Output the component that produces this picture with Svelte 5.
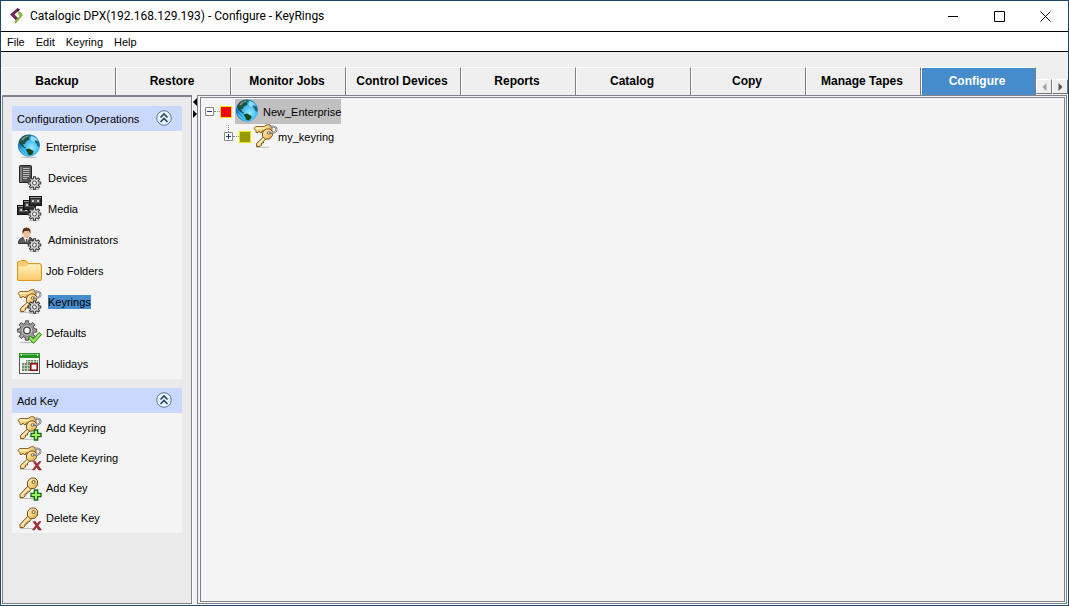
<script>
  const menus = ['File', 'Edit', 'Keyring', 'Help'];
  const tabs = ['Backup', 'Restore', 'Monitor Jobs', 'Control Devices', 'Reports', 'Catalog', 'Copy', 'Manage Tapes', 'Configure'];
  const groups = [
    {
      title: 'Configuration Operations',
      rows: [
        { icon: 'globe', label: 'Enterprise' },
        { icon: 'server', label: 'Devices', wide: true },
        { icon: 'media', label: 'Media', wide: true },
        { icon: 'admin', label: 'Administrators', wide: true },
        { icon: 'folder', label: 'Job Folders' },
        { icon: 'keysGear', label: 'Keyrings', wide: true },
        { icon: 'defaults', label: 'Defaults' },
        { icon: 'calendar', label: 'Holidays' }
      ]
    },
    {
      title: 'Add Key',
      compact: true,
      rows: [
        { icon: 'keysAdd', label: 'Add Keyring' },
        { icon: 'keysDelete', label: 'Delete Keyring' },
        { icon: 'keyAdd', label: 'Add Key' },
        { icon: 'keyDelete', label: 'Delete Key' }
      ]
    }
  ];

  let activeTab = $state('Configure');
  let selected = $state('Keyrings');
  let closed = $state({});

  function gearPath(cx, cy, outer, inner, teeth = 8) {
    const step = (Math.PI * 2) / teeth;
    const at = (r, a) => `${(cx + r * Math.cos(a)).toFixed(2)} ${(cy + r * Math.sin(a)).toFixed(2)}`;
    let d = '';
    for (let i = 0; i < teeth; i++) {
      const a = i * step;
      d += `${i ? 'L' : 'M'}${at(inner, a - step * 0.3)}L${at(outer, a - step * 0.2)}L${at(outer, a + step * 0.2)}L${at(inner, a + step * 0.3)}`;
    }
    return d + 'Z';
  }
  const smallGear = gearPath(17.5, 18, 6.3, 4.5);
  const bigGear = gearPath(10, 10.5, 9.8, 7.4);
</script>

{#snippet globe()}
  <ellipse cx="12" cy="23.3" rx="8" ry="0.8" fill="#bbb" />
  <circle cx="12" cy="11.500" r="11" fill="url(#sea)" />
  <path d="M2.500 6C4.500 2.500 8 .8 12 .7L13 2 11.500 3.500 12.500 5.500 10 7 8.500 8 8 10 6 10 7 12.500 9.500 14 8 14.500 5 12.500 2.500 9.500Z" fill="#1d4f42" />
  <path d="M8.500 15.500 12 14.500 16.500 17 16 19.500 13.500 21.500 11 20.500 10.500 18.500Z" fill="#124a1c" />
  <path d="M19 5 21 6.500 22.500 10 22.500 13 20.500 12 19.500 9.500 18 8Z" fill="#1e6272" />
  <path d="M4.500 5.500C6.500 2.500 9 1.500 12 1.500L11 3 8.500 3.500 7 5.500 4.500 7Z" fill="#9aa79a" opacity=".8" />
  <path d="M14 2C18 2.500 20.500 5 21 7.500L18 6 16 8 13.500 5.500Z" fill="#b4edff" opacity=".75" />
  <path d="M2 14C4 19 8 21.500 11 21.800 6 18.500 5 16 2 14Z" fill="#7fe0ff" opacity=".6" />
{/snippet}

{#snippet gear()}
  <ellipse cx="17" cy="24.300" rx="6" ry=".6" fill="#bbb" />
  <path d={smallGear} fill="#dadada" stroke="#3c3c3c" stroke-width="1.100" />
  <circle cx="17.500" cy="18" r="2" fill="#fafafa" stroke="#4a4a4a" />
{/snippet}

{#snippet oneKey()}
  <path d="M3 22.500H18" stroke="#bdbdbd" />
  <path d="M11 10 3 18.500V21.500H6.500L8 20V18H10V16H12L14 13.500Z" fill="#f5cf80" stroke="#7b5726" stroke-width="1" />
  <path d="M4.200 19.800 12.500 11.200" stroke="#fff0bd" stroke-width="1.300" />
  <path d="M12 3.500 14.500 2H18L20.500 4.500V9L17.500 12.500H13L10.500 10V6Z" fill="url(#brass)" stroke="#795322" stroke-linejoin="round" />
  <circle cx="16.500" cy="6" r="1.500" fill="#fdf8e8" stroke="#684a1d" stroke-width=".9" />
{/snippet}

{#snippet twoKeys()}
  <path d="M3 23.300H16" stroke="#bdbdbd" />
  <path d="M.8 4.500 3 2.500H11L14 .8H17L19 3V7L14 9 11 7H9V8.500H7L6 7 5 8.500H3V6.500Z" fill="url(#brass)" stroke="#81561c" stroke-width=".9" />
  <path d="M2.500 4.300H12" stroke="#fff0b9" stroke-width="1.400" />
  <path d="M11 12.500 3.500 19.500V22.500H7L8.500 21V19H10.500V17L14.500 14Z" fill="#f5cf80" stroke="#735020" stroke-width=".9" />
  <path d="M5 20.800 12 13.500" stroke="#fff0bd" stroke-width="1.300" />
  <path d="M11 6.500 13.500 5H17L19.500 7.500V11.500L16.500 15H12.500L9.500 12.500V9Z" fill="url(#brass)" stroke="#795322" stroke-linejoin="round" />
  <circle cx="15.500" cy="9" r="1.300" fill="#fff7de" stroke="#6c4b20" stroke-width=".8" />
  <path d="M17 3.500C20 1 24 3.500 23.500 6 23 9 18.500 9.500 16 8.500" fill="none" stroke="#777" stroke-width="1.900" />
  <path d="M17 3.500C20 1 24 3.500 23.500 6 23 8.500 19.500 9 17.500 8.500" fill="none" stroke="#d5d5d5" stroke-width=".7" />
{/snippet}

{#snippet plus()}
  <path d="M17.300 14H20.700V17.300H24V20.700H20.700V24H17.300V20.700H14V17.300H17.300Z" fill="#a0ee5c" stroke="#126b14" stroke-width="1.300" />
{/snippet}

{#snippet cross()}
  <path d="M16 15.500H18.500L20 18 22 15.500H24L21.200 19.500 24.500 24H21.500L19.700 21 17.500 24H15.500L18.700 19.500Z" fill="#a82d32" stroke="#7b1e23" stroke-width=".5" />
{/snippet}

{#snippet icon(name)}
  <svg class="icon" viewBox="0 0 25 25" aria-hidden="true">
    {#if name === 'globe'}
      {@render globe()}
    {:else if name === 'server'}
      <path d="M2.500 1.500Q2.500.5 3.500.5H13.500Q14.500.5 14.500 1.500V17.500H2.500Z" fill="#555" stroke="#222" />
      <path d="M4 2V17" stroke="#aaa" />
      <path d="M6 3.500H12.500M6 5.500H12.500M6 7.500H12.500M6 9.500H12.500M6 11.500H12M6 13.500H10" stroke="#b8b8b8" />
      {@render gear()}
    {:else if name === 'media'}
      {#each [[0, 9], [6, 4], [12, 0]] as [x, y]}
        <rect x={x + 0.5} y={y + 0.5} width="12" height="9" fill="#292929" stroke="#111" />
        <path d={`M${x + 1} ${y + 1.5}h11`} stroke="#999" />
        <rect x={x + 2} y={y + 3} width="9" height="4" fill="#555" />
        <path d={`M${x + 3} ${y + 5}h2m3 0h2`} stroke="#eee" stroke-width="1.500" />
      {/each}
      {@render gear()}
    {:else if name === 'admin'}
      <path d="M1.500 16.500Q1 12 6 10.500L9.500 13 13 10.500Q16 11 16 16.500Z" fill="#5c5c5c" stroke="#333" />
      <path d="M6.500 10.500 9.500 16 12.500 10.500Z" fill="#fff" />
      <path d="M9 12H10.500V16H9Z" fill="#555" />
      <ellipse cx="9.500" cy="6.500" rx="3.300" ry="4.700" fill="#efbd94" />
      <path d="M5.500 7Q4.500 .5 9.500.5T13.500 7L12 4H7.500Z" fill="#5a3521" />
      {@render gear()}
    {:else if name === 'folder'}
      <path d="M.5 22V5Q.5 3.500 2 3.500H3L4 2.500H9L11.500 5.500H22Q24.500 5.500 24.500 8V21Q24.500 22.500 23 22.500H2Z" fill="#f8cc70" stroke="#d9951f" />
      <path d="M1.500 8.500H9L11.500 6.500H22.500Q24 7 23.500 8.500V21.500H1.500Z" fill="url(#paper)" />
    {:else if name === 'keysGear'}
      {@render twoKeys()}{@render gear()}
    {:else if name === 'defaults'}
      <path d="M3 22.500H17" stroke="#bbb" />
      <path d={bigGear} fill="#a2a2a2" stroke="#4a4a4a" />
      <circle cx="10" cy="10.500" r="5.800" fill="#c6c6c6" stroke="#777" />
      <circle cx="10" cy="10.500" r="3.300" fill="#f7f7f7" stroke="#444" stroke-width="1.300" />
      <path d="M11.500 18 13.500 16 16.500 19 22 12.500 24.500 14.500 16.500 23.500Z" fill="#9ae64f" stroke="#278022" />
    {:else if name === 'calendar'}
      <rect x="2.500" y="2.500" width="20" height="20" fill="#f7f7f7" stroke="#555" />
      <path d="M2 2H23V7H2Z" fill="#279221" /><path d="M3 3.500H22" stroke="#78c36b" />
      <path d="M4.500 3V5M20.500 3V5" stroke="#d6ffcf" />
      <rect x="9" y="9" width="12" height="3" fill="#738c6d" />
      <rect x="5" y="12" width="8" height="8" fill="#738c6d" />
      <path d="M5 14.500H13M5 17.500H13M9 10.500H21M7.500 12V20M10.500 9V20M13.500 9V12M16.500 9V12M19.500 9V12" stroke="#c6d8c1" stroke-width=".8" />
      <rect x="13.800" y="12.800" width="6.400" height="6.400" fill="#fff" stroke="#971313" stroke-width="1.600" />
    {:else if name === 'keysAdd'}
      {@render twoKeys()}{@render plus()}
    {:else if name === 'keysDelete'}
      {@render twoKeys()}{@render cross()}
    {:else if name === 'keyAdd'}
      {@render oneKey()}{@render plus()}
    {:else if name === 'keyDelete'}
      {@render oneKey()}{@render cross()}
    {:else if name === 'keys'}
      {@render twoKeys()}
    {/if}
  </svg>
{/snippet}

<svg class="defs" aria-hidden="true">
  <defs>
    <radialGradient id="sea" cx=".62" cy=".6" r=".62">
      <stop offset="0" stop-color="#9be9ff" /><stop offset=".6" stop-color="#35b4f0" /><stop offset="1" stop-color="#0a6cb8" />
    </radialGradient>
    <linearGradient id="brass" x1="0" y1="0" x2="1" y2="1">
      <stop offset="0" stop-color="#fff3bd" /><stop offset=".6" stop-color="#f6cb74" /><stop offset="1" stop-color="#d29440" />
    </linearGradient>
    <linearGradient id="paper" x1="0" y1="0" x2="0" y2="1">
      <stop offset="0" stop-color="#fff2c0" /><stop offset="1" stop-color="#fdcb6c" />
    </linearGradient>
  </defs>
</svg>

<div class="window">
  <header class="titlebar">
    <svg class="logo" viewBox="0 0 14 16" aria-hidden="true">
      <path d="M7.500 0 9 2.500 4.500 6.500 9 11 6.500 13 0 6.500Z" fill="#74265f" />
      <path d="M9 3 13 7 5.500 16 4.500 13.500 9.500 8 7.500 5Z" fill="#84b93c" />
      <path d="M7.500 0 10 1.500 9 3 6.500 3.500Z" fill="#3e2942" />
    </svg>
    <h1>Catalogic DPX(192.168.129.193) - Configure - KeyRings</h1>
    <div class="controls">
      <button aria-label="Minimize"><svg viewBox="0 0 11 11"><path d="M0 5.500H10" /></svg></button>
      <button aria-label="Maximize"><svg viewBox="0 0 11 11"><path d="M.5.500H10.500V10.500H.5Z" /></svg></button>
      <button aria-label="Close"><svg viewBox="0 0 11 11"><path d="M.5.500 10.500 10.500M10.500.5.5 10.500" /></svg></button>
    </div>
  </header>

  <nav class="menubar">
    {#each menus as item}<button>{item}</button>{/each}
  </nav>

  <div class="tabbar">
    <div class="tabs" role="tablist">
      {#each tabs as tab}
        <button role="tab" class="tab" class:active={tab === activeTab} aria-selected={tab === activeTab} onclick={() => (activeTab = tab)}>{tab}</button>
      {/each}
    </div>
    <div class="scrollers">
      <button disabled aria-label="Scroll tabs left"><svg viewBox="0 0 5 8"><path d="M4.500 0V8L.5 4Z" /></svg></button>
      <button aria-label="Scroll tabs right"><svg viewBox="0 0 5 8"><path d="M.5 0V8L4.500 4Z" /></svg></button>
    </div>
  </div>

  <div class="body">
    <aside class="sidebar">
      {#each groups as group}
        <section class:compact={group.compact}>
          <header>
            <h2>{group.title}</h2>
            <button class="collapse" aria-label={`Toggle ${group.title}`} onclick={() => (closed[group.title] = !closed[group.title])}>
              <svg viewBox="0 0 16 16">
                <circle cx="8" cy="8" r="7.300" fill="#eaf3fa" stroke="#587a99" />
                <path d="M4.500 7.500 8 4 11.500 7.500M4.500 12 8 8.500 11.500 12" fill="none" stroke="#244865" stroke-width="1.600" />
              </svg>
            </button>
          </header>
          {#if !closed[group.title]}
            <ul>
              {#each group.rows as row}
                <li>
                  <button class="row" class:wide={row.wide} onclick={() => (selected = row.label)}>
                    {@render icon(row.icon)}
                    <span class:selected={selected === row.label}>{row.label}</span>
                  </button>
                </li>
              {/each}
            </ul>
          {/if}
        </section>
      {/each}
    </aside>

    <div class="splitter">
      <svg viewBox="0 0 4 20" aria-hidden="true"><path d="M4 0V8L0 4ZM0 12V20L4 16Z" /></svg>
    </div>

    <main>
      <div class="tree">
        <div class="node">
          <button class="toggle" aria-label="Collapse New_Enterprise"><svg viewBox="0 0 9 9"><path d="M.5.500H8.500V8.500H.5Z" fill="#fff" stroke="#8a8a8a" /><path d="M2 4.500H7" stroke="#23406e" /></svg></button>
          <i class="dots"></i>
          <i class="status red"></i>
          <span class="label current">{@render icon('globe')}<span>New_Enterprise</span></span>
        </div>
        <div class="node child">
          <button class="toggle" aria-label="Expand my_keyring"><svg viewBox="0 0 9 9"><path d="M.5.500H8.500V8.500H.5Z" fill="#fff" stroke="#8a8a8a" /><path d="M2 4.500H7M4.500 2V7" stroke="#23406e" /></svg></button>
          <i class="dots"></i>
          <i class="status olive"></i>
          <span class="label keyring">{@render icon('keys')}<span>my_keyring</span></span>
        </div>
      </div>
    </main>
  </div>
</div>

<style>
  :global(body) { margin: 0; }
  * { box-sizing: border-box; }
  button { margin: 0; padding: 0; border: 0; background: none; font: inherit; color: inherit; }
  h1, h2, ul { margin: 0; padding: 0; font-weight: normal; list-style: none; }
  svg { display: block; flex: none; }
  .defs { position: absolute; width: 0; height: 0; }

  .window {
    display: flex;
    flex-direction: column;
    min-height: 100vh;
    border: 1px solid #1c4768;
    background: #efefef;
    color: #000;
    font: 11px/14px "Liberation Sans", Arial, sans-serif;
  }

  .titlebar { display: flex; align-items: center; height: 31px; padding-left: 9px; background: #fff; border-bottom: 1px solid #000; }
  .logo { width: 14px; height: 16px; }
  h1 { flex: 1; padding-left: 6px; font: 12px/18px Roboto, "Open Sans", sans-serif; white-space: nowrap; }
  .controls { display: flex; }
  .controls button { display: grid; place-items: center; width: 46px; height: 30px; }
  .controls svg { width: 11px; height: 11px; fill: none; stroke: #000; }

  .menubar { display: flex; gap: 11px; height: 20px; padding: 0 6px; background: #fff; border-bottom: 1px solid #000; }

  .tabbar { display: flex; align-items: flex-end; height: 43px; }
  .tabs { display: flex; flex: 0 1 1036px; min-width: 0; }
  .tab {
    flex: 1 1 0;
    min-width: 0;
    height: 28px;
    border: solid;
    border-width: 1px 1px 0;
    border-color: #fff #7e7e7e #fff #fff;
    background: #efefef;
    font-size: 12px;
    font-weight: bold;
    padding: 0 3px 2px 0;
    white-space: nowrap;
  }
  .tab.active { background: #468ccc; color: #fff; }
  .scrollers { display: flex; padding-bottom: 1px; }
  .scrollers button { display: grid; place-items: center; width: 16px; height: 15px; border: 1px solid; border-color: #fff #777 #777 #fff; }
  .scrollers svg { width: 5px; height: 8px; fill: #555; }
  .scrollers button:disabled svg { fill: #a0a0a0; }

  .body { display: flex; flex: 1; padding: 0 1px 1px; background: #fff; }
  .sidebar {
    display: flex;
    flex-direction: column;
    gap: 9px;
    width: 190px;
    padding: 9px 9px 9px;
    border: 1px solid #7d828b;
    border-top-width: 2px;
    background: #eaeaea;
  }
  section { background: #f4f4f4; }
  section header { display: flex; align-items: center; justify-content: space-between; height: 25px; padding: 0 10px 1px 5px; background: #cad8fd; }
  h2 { font-size: 11px; line-height: 14px; padding-top: 2px; }
  .collapse svg { width: 16px; height: 16px; }
  .row { display: flex; align-items: center; gap: 4px; width: 100%; height: 31px; padding-left: 5px; text-align: left; }
  .row.wide { gap: 6px; }
  .compact .row { height: 30px; }
  .icon { width: 25px; height: 25px; }
  .selected { background: #468ccc; }

  .splitter { width: 5px; background: linear-gradient(90deg, #fff 1px, #f2f2f2 1px); }
  .splitter svg { width: 4px; height: 20px; margin: 3px 0 0 1px; }

  main { flex: 1; min-width: 0; display: flex; border: 3px double #7d828b; border-width: 3px 3px 3px 4px; background: #f4f4f4; }
  .tree { padding: 1px 4px; }
  .node { display: flex; align-items: center; height: 25px; }
  .child { position: relative; padding-left: 19px; }
  .child::before { content: ""; position: absolute; left: 23px; top: 1px; height: 7px; border-left: 1px dotted #888; }
  .toggle svg { width: 9px; height: 9px; }
  .dots { width: 6px; border-top: 1px dotted #888; }
  .status { width: 12px; height: 12px; border: 1px solid #e6e600; }
  .red { background: #f00; }
  .olive { background: #999900; }
  .label { display: flex; align-items: center; gap: 3px; height: 25px; margin-left: 3px; }
  .keyring { gap: 0; margin-left: 2px; }
  .current { background: #c0c0c0; }
</style>
